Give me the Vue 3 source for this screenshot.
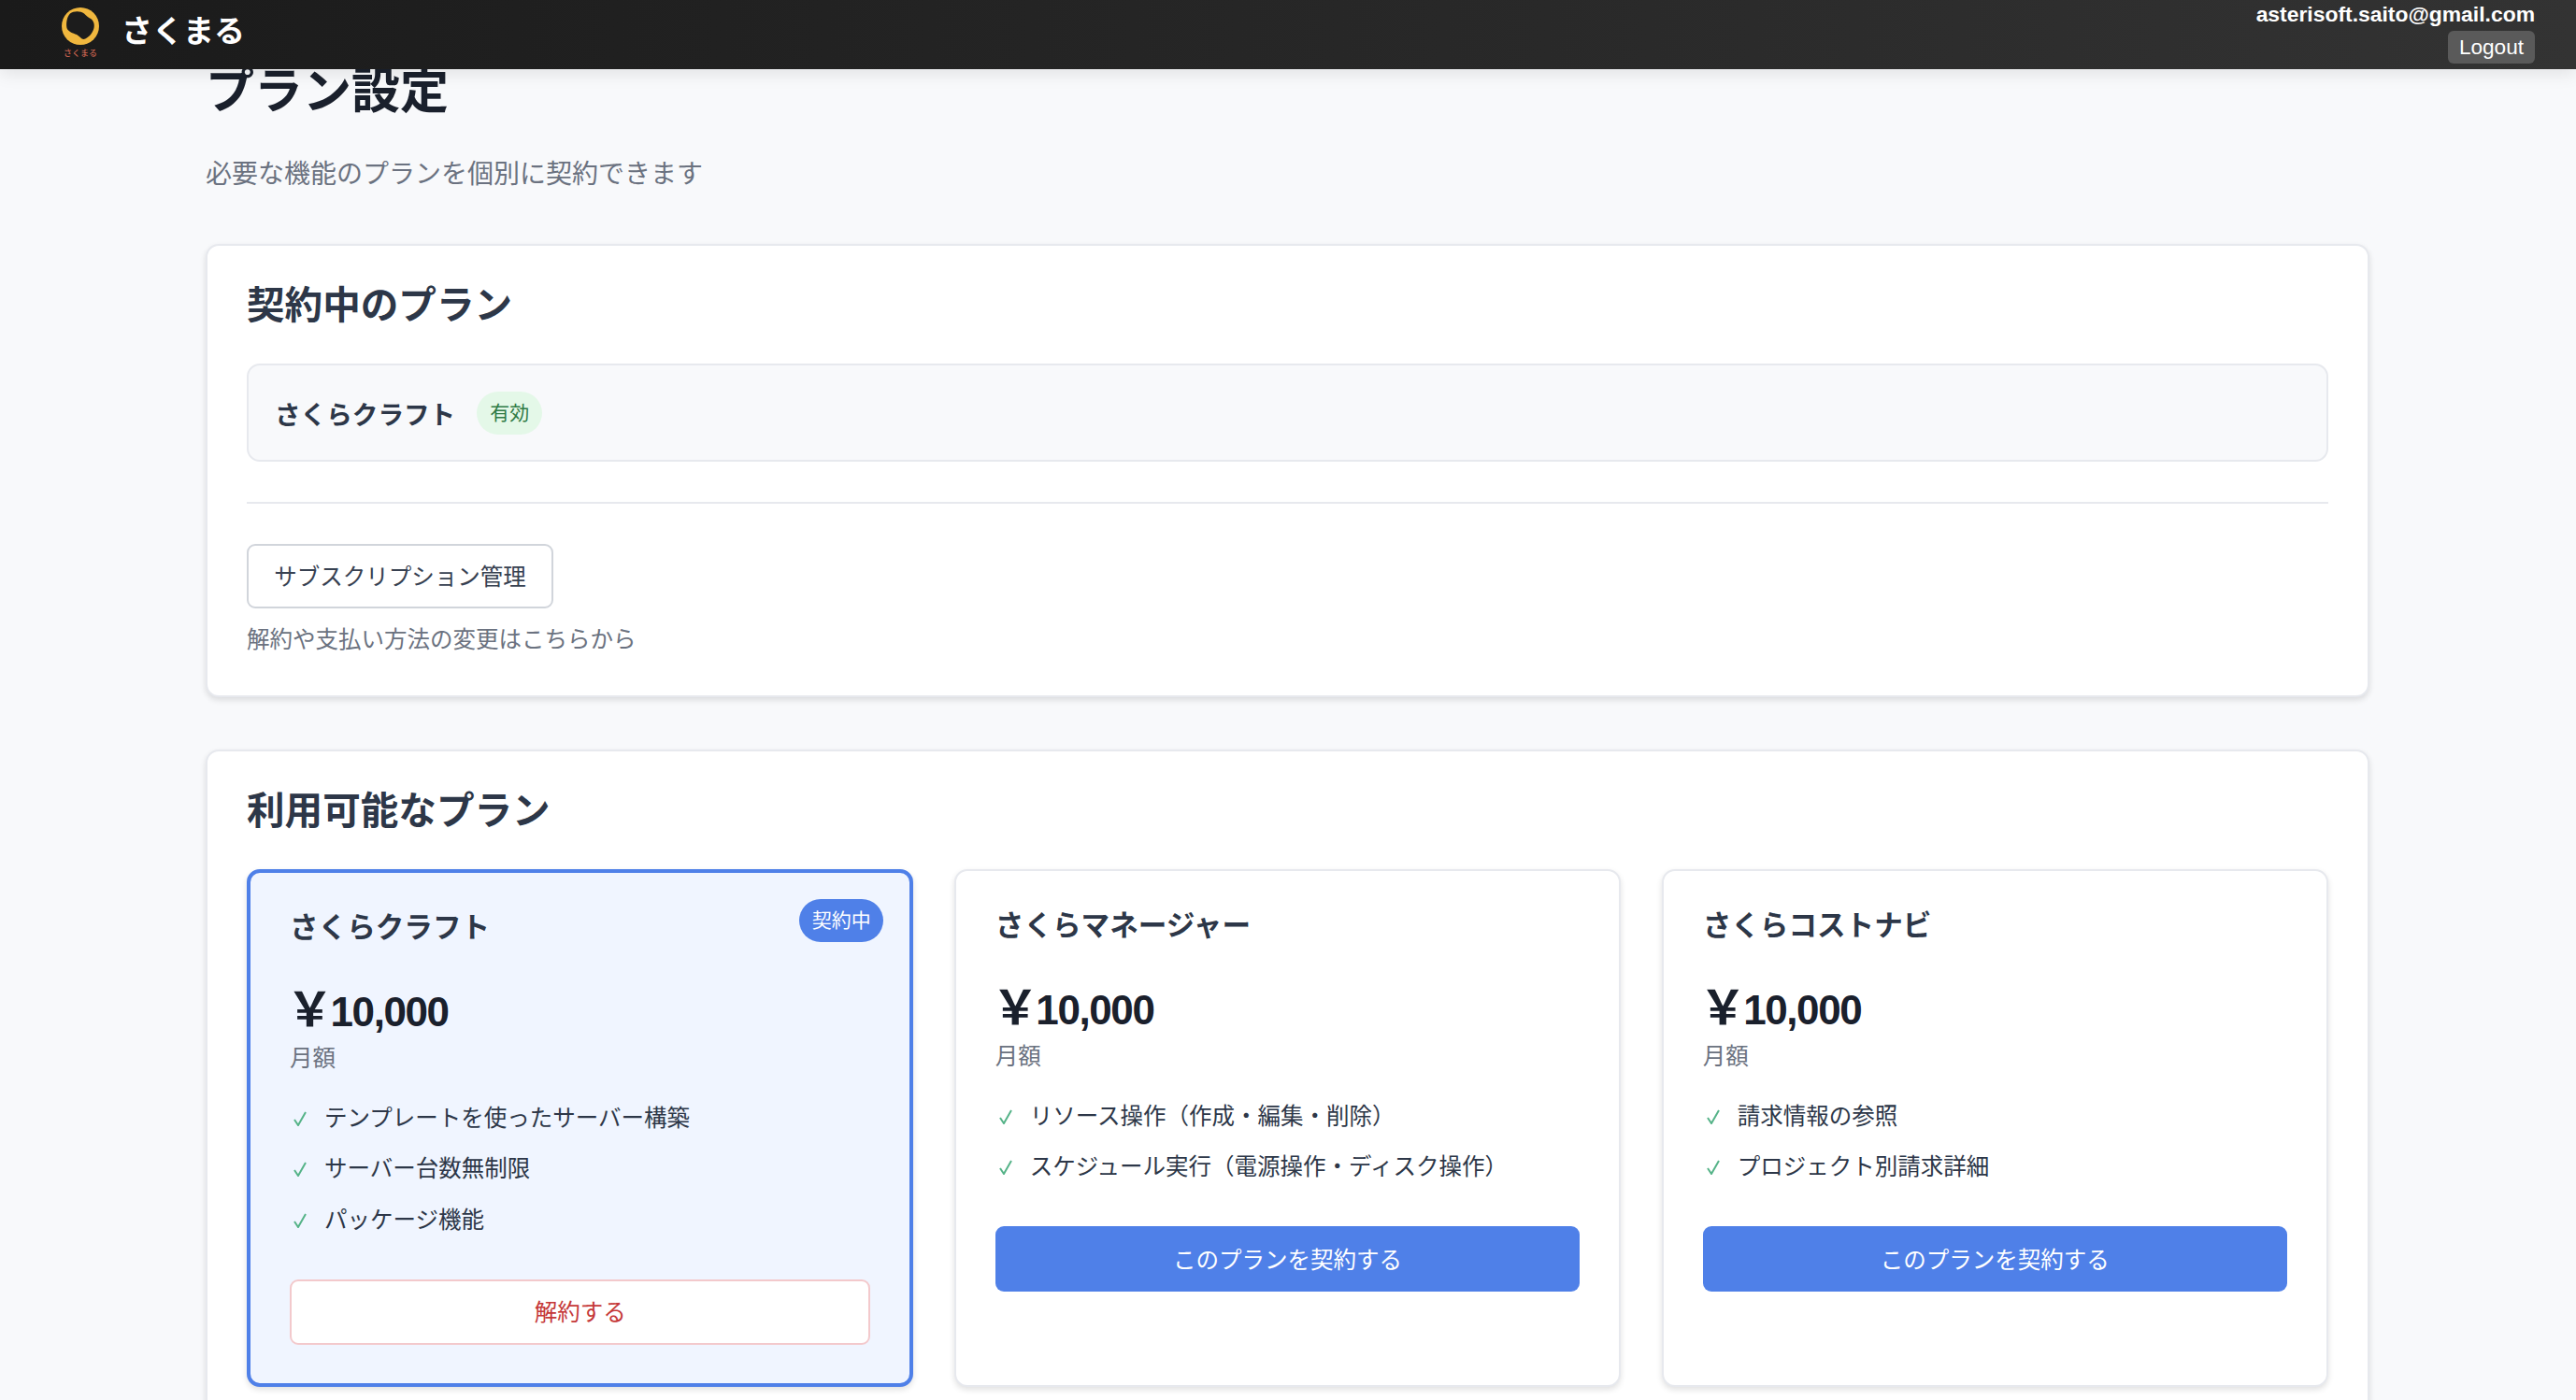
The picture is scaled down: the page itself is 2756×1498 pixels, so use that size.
<template>
  <div class="page">
    <header class="topbar">
      <div class="brand">
        <div class="logo">
          <svg class="logo-mark" viewBox="0 0 40 40" width="40" height="40">
            <circle cx="20" cy="20" r="20" fill="#f0b73e" />
            <path d="M9 6.500C13 3.500 20 3.500 24 6.500C26.500 9 28.500 11 31 12C34 14 35.500 18 34.500 22C33 28 28 33 23.500 34C21 34 19 30.500 16 29C12 27.500 7 26 5.500 22C4.500 17 5.500 10 9 6.500Z" fill="#1c1c1c" />
          </svg>
          <span class="logo-label">さくまる</span>
        </div>
        <span class="brand-name">さくまる</span>
      </div>
      <div class="account">
        <span class="email">asterisoft.saito@gmail.com</span>
        <button class="logout">Logout</button>
      </div>
    </header>

    <main class="content">
      <h1 class="page-title">プラン設定</h1>
      <p class="page-sub">必要な機能のプランを個別に契約できます</p>

      <section class="panel">
        <h2 class="panel-title">契約中のプラン</h2>
        <div class="current-plan">
          <span class="current-name">さくらクラフト</span>
          <span class="status">有効</span>
        </div>
        <hr class="divider" />
        <button class="manage">サブスクリプション管理</button>
        <p class="hint">解約や支払い方法の変更はこちらから</p>
      </section>

      <section class="panel">
        <h2 class="panel-title">利用可能なプラン</h2>
        <div class="plans">
          <div v-for="plan in plans" :key="plan.name" class="plan" :class="{ active: plan.active }">
            <span v-if="plan.active" class="plan-badge">契約中</span>
            <h3 class="plan-name">{{ plan.name }}</h3>
            <div class="price"><span class="yen">￥</span>10,000</div>
            <div class="period">月額</div>
            <ul class="features">
              <li v-for="f in plan.features" :key="f">
                <svg class="check" viewBox="0 0 14 16" width="14" height="16">
                  <path d="M1 9L5 15L13 1" fill="none" stroke="#55b388" stroke-width="2" />
                </svg>
                <span>{{ f }}</span>
              </li>
            </ul>
            <button v-if="plan.active" class="btn-cancel">解約する</button>
            <button v-else class="btn-primary">このプランを契約する</button>
          </div>
        </div>
      </section>
    </main>
  </div>
</template>

<script setup>
const plans = [
  {
    name: 'さくらクラフト',
    active: true,
    features: ['テンプレートを使ったサーバー構築', 'サーバー台数無制限', 'パッケージ機能'],
  },
  {
    name: 'さくらマネージャー',
    active: false,
    features: ['リソース操作（作成・編集・削除）', 'スケジュール実行（電源操作・ディスク操作）'],
  },
  {
    name: 'さくらコストナビ',
    active: false,
    features: ['請求情報の参照', 'プロジェクト別請求詳細'],
  },
]
</script>

<style>
html,
body {
  margin: 0;
  background: #f8f9fb;
}
</style>

<style scoped>
.page {
  height: 100vh;
  overflow: hidden;
  position: relative;
  background: #f8f9fb;
  font-family: "Liberation Sans", "Noto Sans CJK JP", sans-serif;
  color: #2d3748;
}

.topbar {
  position: absolute;
  top: 0;
  left: 0;
  right: 0;
  z-index: 10;
  height: 74px;
  box-sizing: border-box;
  padding: 0 44px 0 66px;
  display: flex;
  justify-content: space-between;
  align-items: flex-start;
  background: linear-gradient(90deg, #1a1a1a, #333333);
  box-shadow: 0 4px 18px rgba(0, 0, 0, 0.1);
}

.brand {
  display: flex;
  align-items: flex-start;
  gap: 24px;
}

.logo {
  width: 40px;
  padding-top: 8px;
  display: flex;
  flex-direction: column;
  align-items: center;
}

.logo-mark {
  display: block;
}

.logo-label {
  font-size: 9px;
  line-height: 12px;
  margin-top: 3px;
  color: #e0705a;
  white-space: nowrap;
}

.brand-name {
  font-size: 33px;
  line-height: 40px;
  margin-top: 14px;
  font-weight: 700;
  color: #fff;
}

.account {
  display: flex;
  flex-direction: column;
  align-items: flex-end;
}

.email {
  font-size: 22.900px;
  line-height: 30px;
  font-weight: 700;
  color: #fff;
}

.logout {
  height: 35px;
  margin-top: 3px;
  padding: 0 12px;
  border: none;
  border-radius: 6px;
  background: #5a5a5a;
  color: #fff;
  font-family: inherit;
  font-size: 22.600px;
}

.content {
  width: 2315px;
  margin-left: 220px;
  padding-top: 67px;
}

.page-title {
  margin: 0 0 38px;
  font-size: 52px;
  line-height: 62px;
  font-weight: 700;
  color: #1a202c;
}

.page-sub {
  margin: 0 0 54px;
  font-size: 28px;
  line-height: 40px;
  color: #6b7280;
}

.panel {
  background: #fff;
  border: 2px solid #e7e9ee;
  border-radius: 14px;
  box-shadow: 0 3px 6px rgba(0, 0, 0, 0.12);
  padding: 39px 42px 41px;
  margin-bottom: 56px;
}

.panel-title {
  margin: 0 0 37px;
  font-size: 40.600px;
  line-height: 50px;
  font-weight: 700;
  color: #2d3748;
}

.current-plan {
  display: flex;
  align-items: center;
  gap: 23px;
  height: 105px;
  box-sizing: border-box;
  padding: 0 28px;
  background: #f8f9fb;
  border: 2px solid #e7e9ee;
  border-radius: 14px;
}

.current-name {
  font-size: 27.600px;
  font-weight: 700;
  color: #2d3748;
}

.status {
  width: 70px;
  height: 46px;
  line-height: 46px;
  text-align: center;
  border-radius: 23px;
  background: #e4f8e8;
  color: #2f7a45;
  font-size: 21px;
}

.divider {
  margin: 43px 0;
  border: none;
  height: 2px;
  background: #e7e9ee;
}

.manage {
  display: block;
  width: 328px;
  height: 69px;
  background: #fff;
  border: 2px solid #d1d5db;
  border-radius: 9px;
  padding: 0 0 3px;
  font-family: inherit;
  font-size: 24.500px;
  color: #374151;
}

.hint {
  margin: 16px 0 0;
  font-size: 24.500px;
  line-height: 36px;
  color: #6b7280;
}

.plans {
  display: grid;
  grid-template-columns: repeat(3, 1fr);
  gap: 43.500px;
}

.plan {
  position: relative;
  box-sizing: border-box;
  padding: 36px 42px 41px;
  background: #fff;
  border: 2px solid #e7e9ee;
  border-radius: 14px;
  box-shadow: 0 3px 6px rgba(0, 0, 0, 0.12);
}

.plan.active {
  border: 4px solid #4f80e8;
  background: #f0f5ff;
}

.plan-badge {
  position: absolute;
  top: 28px;
  right: 28px;
  width: 90px;
  height: 46px;
  line-height: 46px;
  text-align: center;
  border-radius: 23px;
  background: #4f80e8;
  color: #fff;
  font-size: 21px;
}

.plan-name {
  margin: 0 0 40.500px;
  font-size: 30.600px;
  line-height: 44px;
  font-weight: 700;
  color: #2d3748;
}

.price {
  font-size: 44px;
  line-height: 56px;
  font-weight: 700;
  letter-spacing: -1.400px;
  color: #1a202c;
}

.yen {
  font-size: 50px;
  line-height: 1;
  letter-spacing: 0;
  margin-left: -3.500px;
  margin-right: -3px;
}

.period {
  margin-top: 4.500px;
  font-size: 24.500px;
  line-height: 36px;
  color: #6b7280;
}

.features {
  list-style: none;
  margin: 16px 0 0;
  padding: 0;
}

.features li {
  display: flex;
  align-items: center;
  gap: 19px;
  height: 54.500px;
  font-size: 24.500px;
  color: #2d3748;
  padding-left: 4px;
}

.check {
  flex: none;
  margin-top: 5px;
}

.btn-primary,
.btn-cancel {
  display: block;
  width: 100%;
  height: 70px;
  margin-top: 38px;
  padding: 0 0 2px;
  border-radius: 9px;
  font-family: inherit;
  font-size: 24.500px;
}

.btn-primary {
  border: none;
  background: #4f80e8;
  color: #fff;
}

.btn-cancel {
  background: #fff;
  border: 2px solid #f3c9cc;
  color: #c53838;
}
</style>
